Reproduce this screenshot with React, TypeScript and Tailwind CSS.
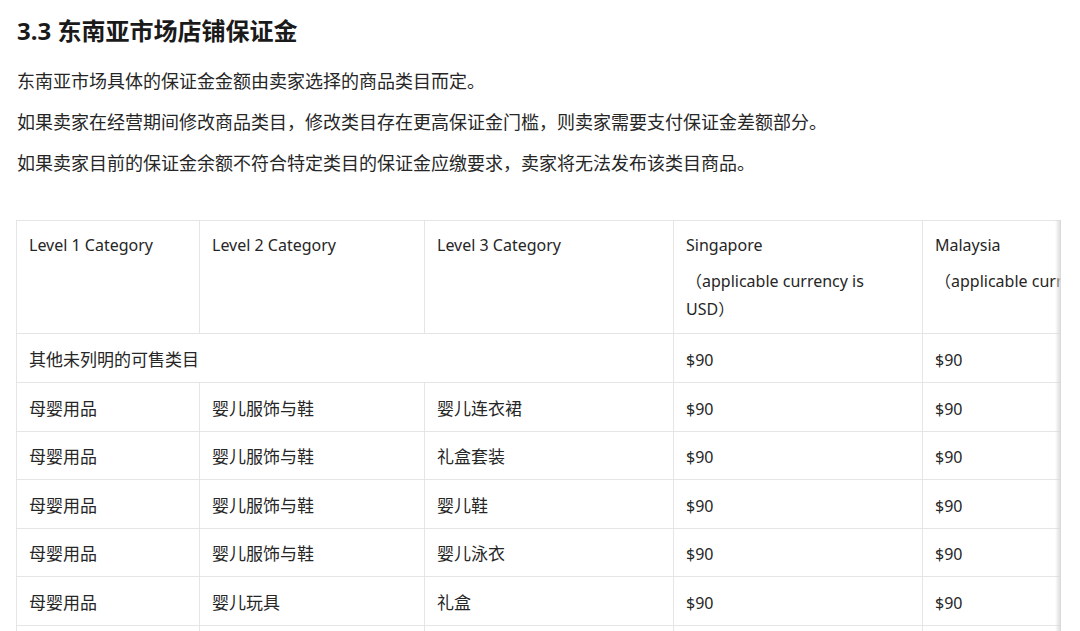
const rows = [
  ["母婴用品", "婴儿服饰与鞋", "婴儿连衣裙"],
  ["母婴用品", "婴儿服饰与鞋", "礼盒套装"],
  ["母婴用品", "婴儿服饰与鞋", "婴儿鞋"],
  ["母婴用品", "婴儿服饰与鞋", "婴儿泳衣"],
  ["母婴用品", "婴儿玩具", "礼盒"],
  ["母婴用品", "婴儿玩具", "玩具"],
];
const td = "border border-[#e5e5e5] px-3 align-top";
const mid = "border border-[#e5e5e5] px-3 pt-[4px] align-middle";
export default function App() {
  return (
    <div className="w-[1080px] h-[631px] overflow-hidden bg-white text-[#262626]" style={{ fontFamily: '"Noto Sans", "Noto Sans CJK SC", sans-serif' }}>
      <h1 className="pl-[17px] pt-[14px] text-[24px] font-bold leading-[34px] text-[#1a1a1a]">3.3 东南亚市场店铺保证金</h1>
      <div className="pl-[17px] pt-[13px] text-[18px] leading-[41px]">
        <p>东南亚市场具体的保证金金额由卖家选择的商品类目而定。</p>
        <p>如果卖家在经营期间修改商品类目，修改类目存在更高保证金门槛，则卖家需要支付保证金差额部分。</p>
        <p>如果卖家目前的保证金余额不符合特定类目的保证金应缴要求，卖家将无法发布该类目商品。</p>
      </div>
      <div className="relative ml-[16px] mt-[36px] w-[1045px] overflow-hidden">
        <div className="absolute right-0 top-0 bottom-0 w-[6px] bg-gradient-to-l from-[#d8d8d8] to-transparent z-10" />
        <table className="border-collapse table-fixed w-[1200px] text-[16px] leading-[28px]">
          <colgroup>
            <col className="w-[183px]" /><col className="w-[225px]" /><col className="w-[249px]" /><col className="w-[249px]" /><col className="w-[294px]" />
          </colgroup>
          <tbody>
            <tr className="h-[113px]">
              <td className={`${td} pt-[10px]`}>Level 1 Category</td>
              <td className={`${td} pt-[10px]`}>Level 2 Category</td>
              <td className={`${td} pt-[10px]`}>Level 3 Category</td>
              <td className={`${td} pt-[10px] pr-[40px]`}>Singapore<div className="mt-[8px]">（applicable currency is USD）</div></td>
              <td className={`${td} pt-[10px]`}>Malaysia<div className="mt-[8px] whitespace-nowrap">（applicable currency is MYR）</div></td>
            </tr>
            <tr className="h-[49px]">
              <td colSpan={3} className={`${mid} text-[17px]`}>其他未列明的可售类目</td>
              <td className={mid}>$90</td>
              <td className={mid}>$90</td>
            </tr>
            {rows.map((r, i) => (
              <tr key={i} className="h-[48.5px]">
                {r.map((c, j) => <td key={j} className={`${mid} text-[17px]`}>{c}</td>)}
                <td className={mid}>$90</td>
                <td className={mid}>$90</td>
              </tr>
            ))}
          </tbody>
        </table>
      </div>
    </div>
  );
}
